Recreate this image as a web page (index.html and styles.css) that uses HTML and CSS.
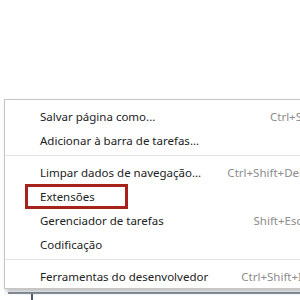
FILE: index.html
```html
<!DOCTYPE html>
<html lang="pt-BR">
<head>
  <meta charset="UTF-8" />
  <title>Menu</title>
  <link rel="stylesheet" href="styles.css">
</head>
<body>
  <div class="menu">
    <div class="menu-item">
      <span class="label">Salvar página como...</span>
      <span class="shortcut">Ctrl+S</span>
    </div>
    <div class="menu-item">
      <span class="label">Adicionar à barra de tarefas...</span>
    </div>
    <div class="separator"></div>
    <div class="menu-item">
      <span class="label">Limpar dados de navegação...</span>
      <span class="shortcut">Ctrl+Shift+Del</span>
    </div>
    <div class="menu-item highlighted">
      <span class="label">Extensões</span>
      <span class="mark"></span>
    </div>
    <div class="menu-item">
      <span class="label">Gerenciador de tarefas</span>
      <span class="shortcut">Shift+Esc</span>
    </div>
    <div class="menu-item">
      <span class="label">Codificação</span>
    </div>
    <div class="separator"></div>
    <div class="menu-item">
      <span class="label">Ferramentas do desenvolvedor</span>
      <span class="shortcut">Ctrl+Shift+I</span>
    </div>
  </div>

  <div class="window-edge">
    <div class="window-frame"></div>
  </div>
</body>
</html>
```

FILE: styles.css
```css
body {
  margin: 0;
  background-color: #ffffff;
  font-family: "Noto Sans", "Open Sans", sans-serif;
  overflow: hidden;
  width: 300px;
  height: 300px;
}

.menu {
  margin-top: 99px;
  margin-left: 4px;
  width: 330px;
  padding-top: 4px;
  background-color: #ffffff;
  border: 1px solid #c6c6c6;
  box-shadow: 2px 3px 4px rgba(0, 0, 0, 0.25);
  position: relative;
  z-index: 1;
}

.menu-item {
  display: flex;
  align-items: center;
  justify-content: space-between;
  height: 24px;
  padding-left: 35px;
  padding-right: 33px;
  font-size: 11.5px;
  color: #222222;
  position: relative;
}

.shortcut {
  color: #8c8c8c;
}

.separator {
  height: 1px;
  background-color: #e3e3e3;
  margin: 3px 0 4px;
}

/* red annotation box round "Extensões" */
.mark {
  position: absolute;
  left: 20px;
  top: 0;
  width: 97px;
  height: 19px;
  border: 3px solid #a8221c;
}

.window-edge {
  margin-top: 3px;
  margin-left: 8px;
  height: 12px;
  border-top: 2px solid #8b93a0;
}

.window-frame {
  margin-left: 23px;
  height: 100%;
  border-left: 2px solid #4b5a72;
}
```
